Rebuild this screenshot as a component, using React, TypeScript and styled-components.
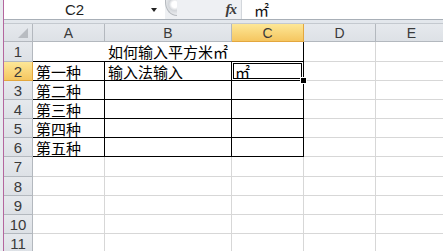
import React from 'react';
import styled, { createGlobalStyle, css } from 'styled-components';

const GlobalStyle = createGlobalStyle`
  body {
    margin: 0;
    background: #fff;
    overflow: hidden;
  }
`;

const Window = styled.div`
  display: flex;
  width: 443px;
  height: 251px;
  overflow: hidden;
  background: #fff;
`;

const EdgeStrip = styled.div`
  flex: none;
  width: 3px;
  background: #e8ebef;
  border-right: 1px solid #b4669e;
`;

const Workbook = styled.div`
  flex: 1;
  min-width: 0;
  display: flex;
  flex-direction: column;
`;

const FormulaBar = styled.div`
  flex: none;
  display: flex;
  height: 20px;
  box-sizing: border-box;
  border-bottom: 1px solid #a8afb7;
  background: #eef0f3;
`;

const NameBox = styled.div`
  width: 161px;
  display: flex;
  align-items: center;
  background: #fff;
  font: 15px 'Liberation Sans', Arial, sans-serif;
  color: #1e1e1e;
`;

const NameText = styled.span`
  flex: 1;
  text-align: center;
`;

const DropArrow = styled.span`
  width: 20px;
  display: flex;
  justify-content: center;

  &::before {
    content: '';
    margin-left: -2px;
    border-left: 3px solid transparent;
    border-right: 3px solid transparent;
    border-top: 4px solid #222;
  }
`;

const Grip = styled.div`
  width: 12px;
  height: 16px;
  box-sizing: border-box;
  border: 1px solid #b5b9be;
  border-top: none;
  border-right: none;
  border-radius: 0 0 0 12px / 0 0 0 14px;
  background: radial-gradient(circle at 80% 30%, #ffffff 0 3px, #d3d6da 6px, #e9ebee 10px);
`;

const FxZone = styled.div`
  width: 64px;
  display: flex;
  align-items: center;
  justify-content: flex-end;
  padding-right: 5px;
  box-sizing: border-box;
  font: italic bold 15px 'Liberation Serif', 'Times New Roman', serif;
  color: #3c3c3c;
  letter-spacing: -1px;
`;

const FormulaInput = styled.div`
  flex: 1;
  display: flex;
  align-items: center;
  padding-left: 12px;
  background: #fff;
  border-left: 1px solid #d3d7dc;
  font: 15px 'Noto Sans CJK SC', sans-serif;
  color: #111;
`;

const Spacer = styled.div`
  flex: none;
  height: 3px;
  background: #e3e7ec;
  border-bottom: 1px solid #c4c9cf;
`;

const Sheet = styled.div`
  display: grid;
  grid-template-columns: 29px 72px 127px 72px 72px 72px;
  grid-template-rows: 18px 20px 19px 19px 19px 19px 19px 20px 19px 19px 19px 19px;
`;

const headerBase = css<{ $active?: boolean }>`
  box-sizing: border-box;
  display: flex;
  align-items: center;
  justify-content: center;
  border-right: 1px solid #b3b8be;
  border-bottom: 1px solid #b3b8be;
  background: linear-gradient(#e6e9ed, #dde1e6);
  font: 14px 'Liberation Sans', Arial, sans-serif;
  color: #3a3a3a;
  ${({ $active }) =>
    $active &&
    css`
      background: linear-gradient(#fde797, #f5c660);
      border-color: #e3a73e;
    `}
`;

const Corner = styled.div`
  ${headerBase};
  position: relative;

  &::after {
    content: '';
    position: absolute;
    right: 4px;
    bottom: 3px;
    width: 10px;
    height: 10px;
    background: #b8bcc1;
    clip-path: polygon(100% 0, 100% 100%, 0 100%);
  }
`;

const ColHeader = styled.div<{ $active?: boolean }>`
  ${headerBase};
`;

const RowHeader = styled.div<{ $active?: boolean }>`
  ${headerBase};
  font-size: 15px;
`;

const Cell = styled.div<{ $boxed?: boolean; $span?: number; $center?: boolean; $selected?: boolean }>`
  box-sizing: border-box;
  position: relative;
  display: flex;
  align-items: center;
  justify-content: ${({ $center }) => ($center ? 'center' : 'flex-start')};
  padding: 0 3px;
  grid-column: span ${({ $span }) => $span || 1};
  border-right: 1px solid ${({ $boxed }) => ($boxed ? '#000' : '#d7d7d7')};
  border-bottom: 1px solid ${({ $boxed }) => ($boxed ? '#000' : '#d7d7d7')};
  font: 15px 'Noto Sans CJK SC', sans-serif;
  color: #000;
  white-space: nowrap;
  ${({ $selected }) =>
    $selected &&
    css`
      box-shadow: inset 0 0 0 1px #fff, inset 0 0 0 2px #000;
    `}
`;

const FillHandle = styled.span`
  position: absolute;
  right: -4px;
  bottom: -4px;
  z-index: 2;
  width: 5px;
  height: 5px;
  background: #000;
  border: 1px solid #fff;
`;

const columns = ['A', 'B', 'C', 'D', 'E'];

const tableRows = [
  ['第一种', '输入法输入', '㎡'],
  ['第二种', '', ''],
  ['第三种', '', ''],
  ['第四种', '', ''],
  ['第五种', '', ''],
];

const App = () => {
  return (
    <>
      <GlobalStyle />
      <Window>
        <EdgeStrip />
        <Workbook>
          <FormulaBar>
            <NameBox>
              <NameText>C2</NameText>
              <DropArrow />
            </NameBox>
            <Grip />
            <FxZone>fx</FxZone>
            <FormulaInput>㎡</FormulaInput>
          </FormulaBar>
          <Spacer />
          <Sheet>
            <Corner />
            {columns.map((col) => (
              <ColHeader key={col} $active={col === 'C'}>
                {col}
              </ColHeader>
            ))}

            <RowHeader>1</RowHeader>
            <Cell $boxed $span={3} $center>
              如何输入平方米㎡
            </Cell>
            <Cell />
            <Cell />

            {tableRows.map((row, i) => (
              <React.Fragment key={i}>
                <RowHeader $active={i === 0}>{i + 2}</RowHeader>
                {row.map((text, j) => (
                  <Cell key={j} $boxed $selected={i === 0 && j === 2}>
                    {text}
                    {i === 0 && j === 2 && <FillHandle />}
                  </Cell>
                ))}
                <Cell />
                <Cell />
              </React.Fragment>
            ))}

            {[7, 8, 9, 10, 11].map((n) => (
              <React.Fragment key={n}>
                <RowHeader>{n}</RowHeader>
                {columns.map((col) => (
                  <Cell key={col} />
                ))}
              </React.Fragment>
            ))}
          </Sheet>
        </Workbook>
      </Window>
    </>
  );
};

export default App;
